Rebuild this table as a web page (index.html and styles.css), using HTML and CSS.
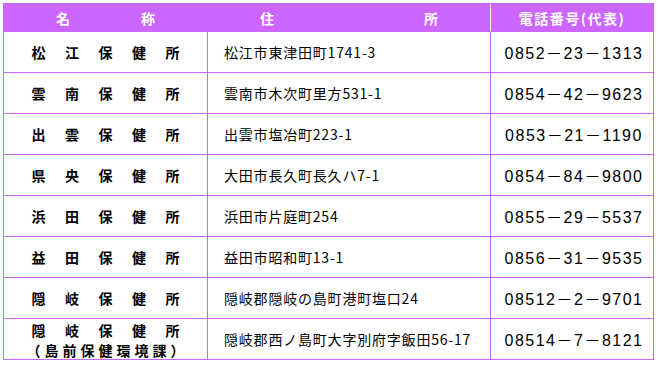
FILE: index.html
```html
<!DOCTYPE html>
<html lang="ja">
<head>
<meta charset="utf-8">
<title>保健所一覧</title>
<link rel="stylesheet" href="styles.css">
</head>
<body>
<div class="table" role="table">
  <div class="cell head h-name" role="columnheader"><span class="spread w-99"><span>名</span><span>称</span></span></div>
  <div class="cell head h-addr" role="columnheader"><span class="spread w-178"><span>住</span><span>所</span></span></div>
  <div class="cell head h-tel" role="columnheader">電話番号(代表)</div>

  <div class="cell name"><span class="spread w-148"><span>松</span><span>江</span><span>保</span><span>健</span><span>所</span></span></div>
  <div class="cell addr">松江市東津田町1741-3</div>
  <div class="cell tel">0852－23－1313</div>

  <div class="cell name"><span class="spread w-148"><span>雲</span><span>南</span><span>保</span><span>健</span><span>所</span></span></div>
  <div class="cell addr">雲南市木次町里方531-1</div>
  <div class="cell tel">0854－42－9623</div>

  <div class="cell name"><span class="spread w-148"><span>出</span><span>雲</span><span>保</span><span>健</span><span>所</span></span></div>
  <div class="cell addr">出雲市塩冶町223-1</div>
  <div class="cell tel">0853－21－1190</div>

  <div class="cell name"><span class="spread w-148"><span>県</span><span>央</span><span>保</span><span>健</span><span>所</span></span></div>
  <div class="cell addr">大田市長久町長久ハ7-1</div>
  <div class="cell tel">0854－84－9800</div>

  <div class="cell name"><span class="spread w-148"><span>浜</span><span>田</span><span>保</span><span>健</span><span>所</span></span></div>
  <div class="cell addr">浜田市片庭町254</div>
  <div class="cell tel">0855－29－5537</div>

  <div class="cell name"><span class="spread w-148"><span>益</span><span>田</span><span>保</span><span>健</span><span>所</span></span></div>
  <div class="cell addr">益田市昭和町13-1</div>
  <div class="cell tel">0856－31－9535</div>

  <div class="cell name"><span class="spread w-148"><span>隠</span><span>岐</span><span>保</span><span>健</span><span>所</span></span></div>
  <div class="cell addr">隠岐郡隠岐の島町港町塩口24</div>
  <div class="cell tel">08512－2－9701</div>

  <div class="cell name two">
    <span class="spread w-148"><span>隠</span><span>岐</span><span>保</span><span>健</span><span>所</span></span>
    <span class="spread w-158"><span>（</span><span>島</span><span>前</span><span>保</span><span>健</span><span>環</span><span>境</span><span>課</span><span>）</span></span>
  </div>
  <div class="cell addr">隠岐郡西ノ島町大字別府字飯田56-17</div>
  <div class="cell tel">08514－7－8121</div>
</div>
</body>
</html>
```
FILE: styles.css
```css
html, body {
  margin: 0;
  padding: 0;
  background: #ffffff;
}

body {
  padding: 3px;
  font-family: "Noto Sans CJK JP", "Noto Sans", sans-serif;
  color: #000000;
}

.table {
  display: grid;
  grid-template-columns: 204px 283px 163px;
  grid-template-rows: 28px repeat(8, 41px);
  width: max-content;
  border-left: 1px solid #cc66ff;
  border-top: 1px solid #cc66ff;
}

.cell {
  box-sizing: border-box;
  border-right: 1px solid #cc66ff;
  border-bottom: 1px solid #cc66ff;
  display: flex;
  align-items: center;
  overflow: hidden;
}

.head {
  background: #cc66ff;
  color: #ffffff;
  font-weight: bold;
  font-size: 14px;
  line-height: 16px;
  justify-content: center;
}

.h-addr {
  border-right-color: #ffffff;
}

.h-tel {
  letter-spacing: 1.5px;
}

.spread {
  display: flex;
  justify-content: space-between;
}

.w-99 { width: 99px; }
.w-178 { width: 178px; }
.w-148 { width: 148px; }
.w-158 { width: 158px; }

.name {
  justify-content: center;
  font-weight: bold;
  font-size: 14px;
  line-height: 20px;
}

.name.two {
  flex-direction: column;
  justify-content: center;
  padding-top: 1px;
}

.addr {
  padding-left: 16px;
  font-size: 14px;
  letter-spacing: 0.8px;
  white-space: nowrap;
}

.tel {
  justify-content: center;
  font-family: "Liberation Sans", "Noto Sans CJK JP", sans-serif;
  font-size: 16px;
  letter-spacing: 1.5px;
  padding-left: 4px;
}
```
